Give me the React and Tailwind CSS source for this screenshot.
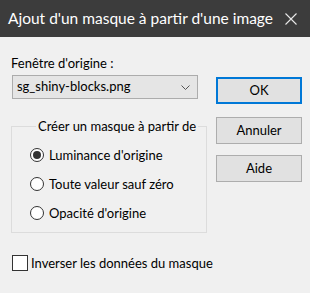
import React from 'react';

const font = { fontFamily: 'Lato, "Noto Sans", sans-serif' };

const Radio = ({ checked, label }) => (
  <div className="flex h-[29px] items-center">
    <span className="flex h-[14px] w-[14px] shrink-0 items-center justify-center rounded-full border border-[#333333] bg-white">
      {checked && <span className="h-[8px] w-[8px] rounded-full bg-[#333333]" />}
    </span>
    <span className="ml-[5px] whitespace-nowrap text-[13px] leading-[16px] text-black">{label}</span>
  </div>
);

const DlgButton = ({ label, primary, className = '' }) => (
  <button
    className={`flex h-[27px] w-[86px] items-center justify-center bg-[#e1e1e1] text-[13px] text-black ${
      primary ? 'border-2 border-[#0078d7]' : 'border border-[#adadad]'
    } ${className}`}
  >
    {label}
  </button>
);

export default function App() {
  return (
    <div className="h-[293px] w-[310px] overflow-hidden bg-[#f0f0f0]" style={font}>
      {/* Title bar */}
      <div className="flex h-[37px] items-center justify-between bg-[#3c3c3c] pl-[8px] pr-[13px]">
        <span className="whitespace-nowrap text-[15.5px] text-white">Ajout d'un masque à partir d'une image</span>
        <svg width="12" height="12" viewBox="0 0 12 12" className="shrink-0">
          <path d="M0.5 0.5 L11.5 11.5 M11.5 0.5 L0.5 11.5" stroke="#e8e8e8" strokeWidth="1.1" fill="none" />
        </svg>
      </div>

      <div className="flex pl-[11px] pt-[18px]">
        {/* Left column */}
        <div className="w-[187px] shrink-0">
          <div className="whitespace-nowrap text-[13px] leading-[16px] text-black">Fenêtre d'origine :</div>
          <div className="mt-[4px] ml-[1px] flex h-[24px] items-center justify-between border border-[#acacac] bg-[#e5e5e5] pl-[4px] pr-[7px]">
            <span className="whitespace-nowrap text-[13px] text-black">sg_shiny-blocks.png</span>
            <svg width="9" height="5" viewBox="0 0 9 5">
              <path d="M0.5 0.5 L4.5 4.5 L8.5 0.5" stroke="#555" strokeWidth="1" fill="none" />
            </svg>
          </div>

          <fieldset className="mt-[19px] border border-[#dcdcdc] pb-[5px] pl-[18px] pr-2">
            <legend className="ml-[6px] whitespace-nowrap px-[2px] text-[13px] leading-[16px] text-black">
              Créer un masque à partir de
            </legend>
            <div className="pt-[6px]">
              <Radio checked label="Luminance d'origine" />
              <Radio label="Toute valeur sauf zéro" />
              <Radio label="Opacité d'origine" />
            </div>
          </fieldset>

          <div className="mt-[22px] flex items-center">
            <span className="ml-[1px] h-[16px] w-[16px] shrink-0 border border-[#333333] bg-white" />
            <span className="ml-[3px] whitespace-nowrap text-[13px] leading-[16px] text-black">
              Inverser les données du masque
            </span>
          </div>
        </div>

        {/* Right column */}
        <div className="ml-[18px] flex flex-col pt-[22px]">
          <DlgButton label="OK" primary />
          <DlgButton label="Annuler" className="mt-[13px]" />
          <DlgButton label="Aide" className="mt-[11px]" />
        </div>
      </div>
    </div>
  );
}
